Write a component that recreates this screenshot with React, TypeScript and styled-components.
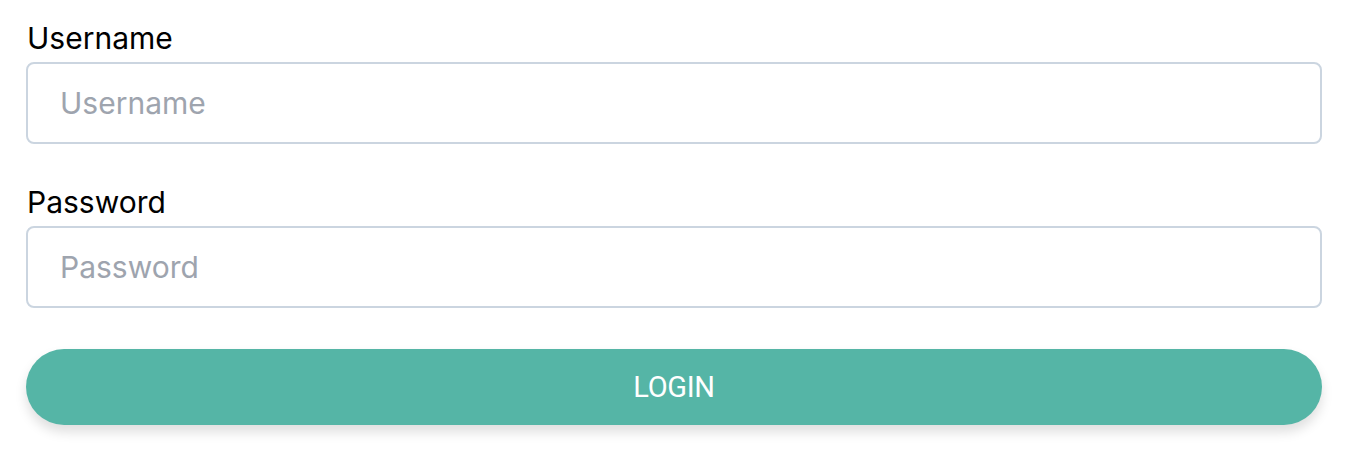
import React from "react";
import styled, { createGlobalStyle } from "styled-components";

const GlobalStyle = createGlobalStyle`
  html, body { margin: 0; padding: 0; background: #ffffff; }
  body { font-family: Inter, "Liberation Sans", Arial, sans-serif; }
  * { box-sizing: border-box; }
`;

const Form = styled.form`
  display: flex;
  flex-direction: column;
  gap: 40px;
  padding: 20px 36px 40px 26px;
`;

const Field = styled.div`
  display: flex;
  flex-direction: column;
`;

const Label = styled.label`
  font-family: Inter, "Liberation Sans", sans-serif;
  font-size: 30px;
  line-height: 36px;
  color: #000000;
  margin: 0 0 6px 1px;
`;

const Input = styled.input`
  height: 82px;
  width: 100%;
  border: 2px solid #cbd5e0;
  border-radius: 8px;
  padding: 0 33px 0 32px;
  font-family: Inter, "Liberation Sans", sans-serif;
  font-size: 30px;
  color: #2d3748;
  background: #ffffff;
  outline: none;
  &::placeholder { color: #9ea4ae; }
`;

const Button = styled.button`
  margin-top: 1px;
  height: 76px;
  width: 100%;
  border: none;
  border-radius: 38px;
  background: #55b5a6;
  color: #ffffff;
  font-family: Roboto, "Liberation Sans", Arial, sans-serif;
  font-size: 29px;
  letter-spacing: -0.3px;
  box-shadow: 0 7px 12px rgba(0, 0, 0, 0.13);
  cursor: pointer;
`;

export default function App() {
  return (
    <>
      <GlobalStyle />
      <Form onSubmit={(e) => e.preventDefault()}>
        <Field>
          <Label htmlFor="username">Username</Label>
          <Input id="username" type="text" placeholder="Username" />
        </Field>
        <Field>
          <Label htmlFor="password">Password</Label>
          <Input id="password" type="password" placeholder="Password" />
        </Field>
        <Button type="submit">LOGIN</Button>
      </Form>
    </>
  );
}
